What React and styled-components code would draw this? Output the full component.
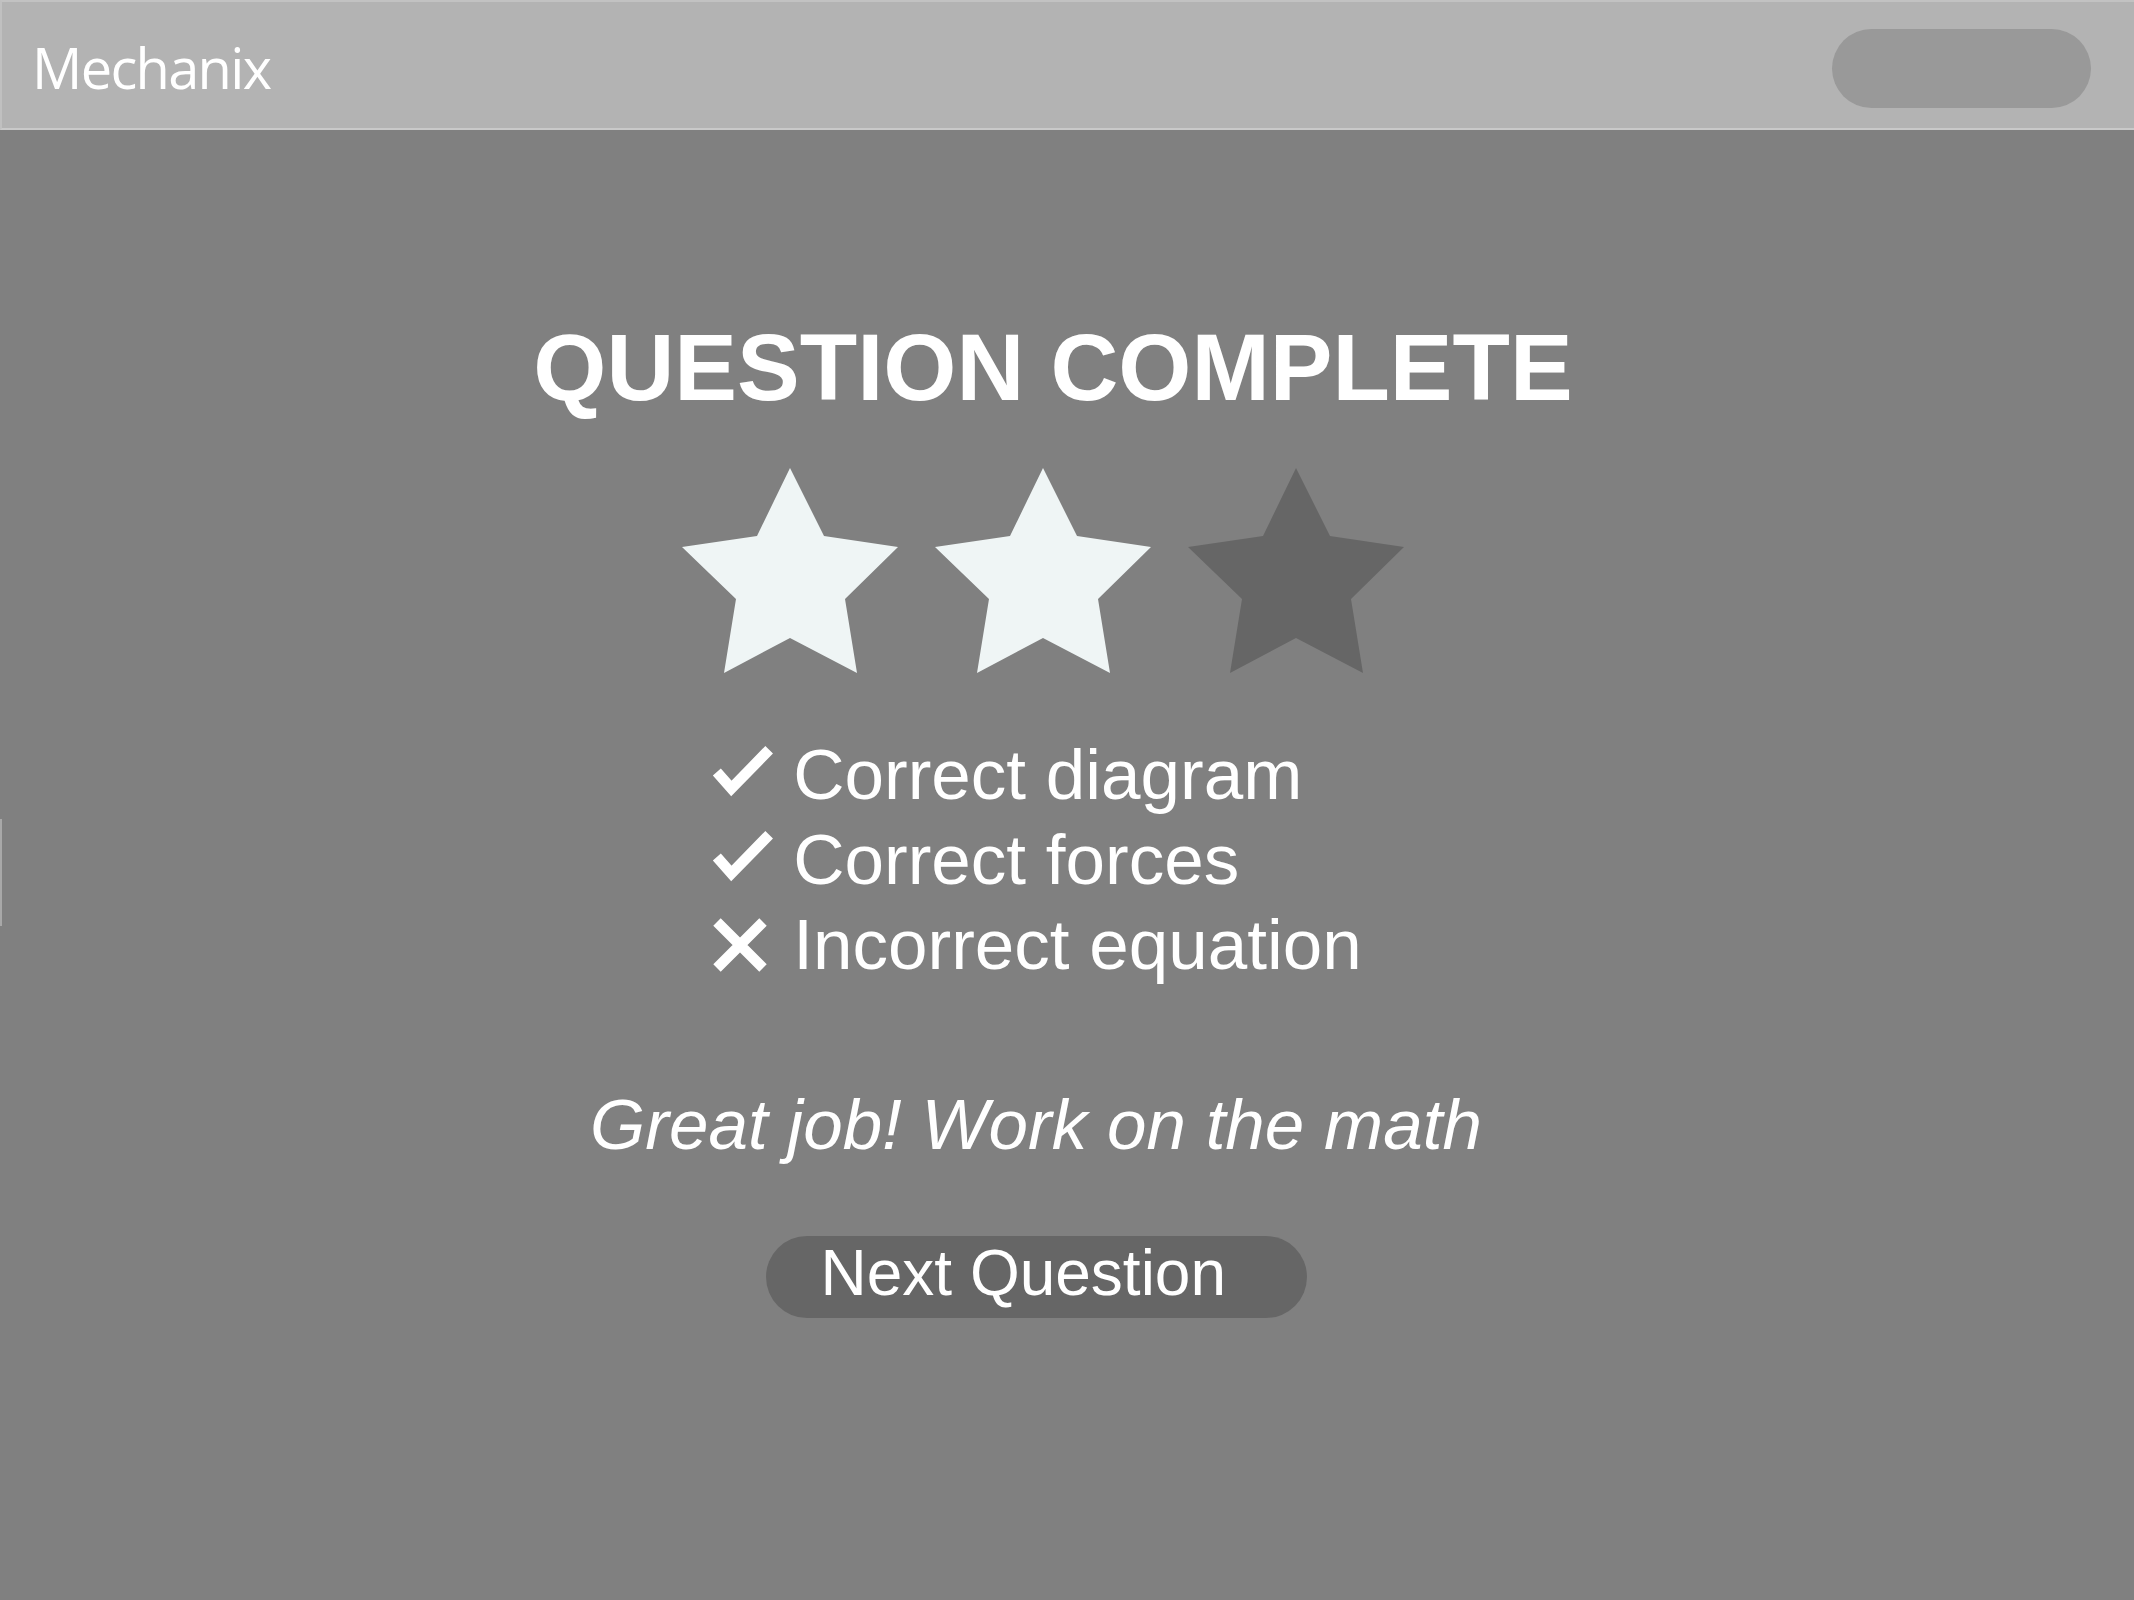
import styled, { createGlobalStyle } from "styled-components";

const GlobalStyle = createGlobalStyle`
  html, body {
    margin: 0;
    padding: 0;
    background: #808080;
    overflow: hidden;
  }
  * {
    box-sizing: border-box;
  }
`;

const Frame = styled.div`
  width: 2134px;
  height: 1600px;
  display: flex;
  flex-direction: column;
  background: #808080;
`;

const Header = styled.header`
  height: 130px;
  flex-shrink: 0;
  display: flex;
  align-items: center;
  justify-content: space-between;
  padding: 0 43px 0 30px;
  background: #b3b3b3;
  border-top: 2px solid #c2c2c2;
  border-left: 2px solid #c0c0c0;
  border-bottom: 2px solid #c9c9c9;
`;

const Logo = styled.div`
  margin-top: 4px;
  font-family: "Open Sans", "Liberation Sans", sans-serif;
  font-size: 56px;
  line-height: 1;
  letter-spacing: -1.7px;
  color: #ffffff;
`;

const HeaderPill = styled.div`
  margin-top: 7px;
  width: 259px;
  height: 79px;
  border-radius: 40px;
  background: #999999;
`;

const Main = styled.main`
  position: relative;
  flex: 1;
  display: flex;
  flex-direction: column;
  align-items: center;
  padding: 191px 40px 0 0;
  font-family: "Liberation Sans", Arial, sans-serif;
  color: #ffffff;
`;

const SideHandle = styled.div`
  position: absolute;
  left: 0;
  top: 689px;
  width: 2px;
  height: 107px;
  background: #a8a8a8;
`;

const Title = styled.h1`
  margin: 0 0 0 12px;
  font-size: 94px;
  font-weight: 700;
  line-height: 1;
`;

const Stars = styled.div`
  display: flex;
  gap: 37px;
  margin: 53px 8px 0 0;
`;

const List = styled.ul`
  list-style: none;
  margin: 59px 20px 0 0;
  padding: 0;
`;

const Row = styled.li`
  display: flex;
  align-items: center;
  gap: 19px;
  height: 85px;
  font-size: 71px;
  line-height: 85px;
`;

const IconBox = styled.span`
  width: 62px;
  display: flex;
  justify-content: flex-start;
  margin-bottom: ${(p) => (p.$lift ? 6 : 0)}px;
`;

const Feedback = styled.p`
  margin: 102px 22px 0 0;
  font-size: 71px;
  font-style: italic;
  line-height: 1;
`;

const NextButton = styled.button`
  margin: 76px 22px 0 0;
  width: 541px;
  height: 82px;
  padding: 0 0 8px 55px;
  border: none;
  border-radius: 41px;
  background: #666666;
  color: #ffffff;
  font-family: "Liberation Sans", Arial, sans-serif;
  font-size: 64px;
  line-height: 74px;
  text-align: left;
`;

const STAR_POINTS =
  "108,0 142,68 216,79 163,131 175,205 108,170 42,205 54,131 0,79 75,68";

function Star({ filled }) {
  return (
    <svg width="216" height="205" viewBox="0 0 216 205">
      <polygon points={STAR_POINTS} fill={filled ? "#eff5f5" : "#666666"} />
    </svg>
  );
}

function CheckIcon() {
  return (
    <svg width="64" height="54" viewBox="0 0 64 54">
      <path
        d="M5 27 L20 44 L59 4"
        fill="none"
        stroke="#ffffff"
        strokeWidth="11"
        strokeLinecap="butt"
        strokeLinejoin="miter"
      />
    </svg>
  );
}

function CrossIcon() {
  return (
    <svg width="56" height="54" viewBox="0 0 56 54">
      <path
        d="M5 4 L51 50 M51 4 L5 50"
        fill="none"
        stroke="#ffffff"
        strokeWidth="10.5"
        strokeLinecap="butt"
      />
    </svg>
  );
}

const results = [
  { ok: true, label: "Correct diagram" },
  { ok: true, label: "Correct forces" },
  { ok: false, label: "Incorrect equation" },
];

export default function App() {
  return (
    <>
      <GlobalStyle />
      <Frame>
        <Header>
          <Logo>Mechanix</Logo>
          <HeaderPill />
        </Header>
        <Main>
          <SideHandle />
          <Title>QUESTION COMPLETE</Title>
          <Stars>
            <Star filled />
            <Star filled />
            <Star />
          </Stars>
          <List>
            {results.map((r) => (
              <Row key={r.label}>
                <IconBox $lift={r.ok}>{r.ok ? <CheckIcon /> : <CrossIcon />}</IconBox>
                <span>{r.label}</span>
              </Row>
            ))}
          </List>
          <Feedback>Great job! Work on the math</Feedback>
          <NextButton>Next Question</NextButton>
        </Main>
      </Frame>
    </>
  );
}
